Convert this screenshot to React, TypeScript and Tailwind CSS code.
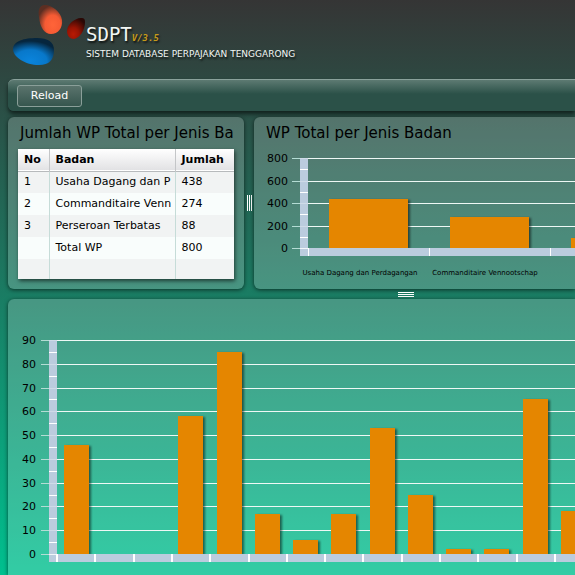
import React from "react";

type Bar = { x: number; width: number; value: number };

type ChartProps = {
  label: string;
  top: number;
  height: number;
  max: number;
  step: number;
  axisX: number;
  labelX: number;
  bars: Bar[];
  ticks: number[];
  tickWidth: number;
  className: string;
  children?: React.ReactNode;
};

function ColumnChart(props: ChartProps) {
  const { label, top, height, max, step, axisX, labelX, bars, ticks, tickWidth, className, children } = props;
  const base = top + height;
  const yOf = (v: number) => Math.round(base - (v / max) * height);
  const majors: number[] = [];
  for (let v = 0; v <= max; v += step) majors.push(v);

  return (
    <svg role="img" aria-label={label} className={className} shapeRendering="crispEdges">
      {majors.map((v) => (
        <g key={v}>
          <rect x={axisX - 8} y={yOf(v)} width="8" height="1" fill="#b4dcd4" />
          {v > 0 && <rect x={axisX} y={yOf(v)} width="100%" height="1" fill="#eef8f5" />}
          <text x={labelX} y={yOf(v) + 4} textAnchor="end" className="text-[11px]" fill="#000000">
            {v}
          </text>
        </g>
      ))}
      <rect x={axisX} y={top} width="8" height={height + 8} fill="#bbccde" />
      {majors.map((v) => (
        <g key={v} fill="#ffffff">
          <rect x={axisX} y={yOf(v)} width="8" height="1" fillOpacity={v > 0 ? 0.3 : 0.8} />
          {v < max && <rect x={axisX} y={yOf(v + step / 2)} width="8" height="1" />}
        </g>
      ))}
      {bars.map((b) => (
        <rect
          key={b.x}
          x={b.x}
          y={yOf(b.value)}
          width={b.width}
          height={base - yOf(b.value)}
          fill="#e58600"
          className="drop-shadow-[2px_1px_1px_rgba(0,0,0,0.5)]"
        />
      ))}
      <rect x={axisX + 8} y={base} width="100%" height="8" fill="#bbccde" />
      {ticks.map((x) => (
        <rect key={x} x={x} y={base} width={tickWidth} height="8" fill="#ffffff" />
      ))}
      {children}
    </svg>
  );
}

const rows = [
  { no: "1", badan: "Usaha Dagang dan P", jumlah: "438" },
  { no: "2", badan: "Commanditaire Venn", jumlah: "274" },
  { no: "3", badan: "Perseroan Terbatas", jumlah: "88" },
  { no: "", badan: "Total WP", jumlah: "800" },
  { no: "", badan: "", jumlah: "" },
];

const badanBars: Bar[] = [
  { x: 75, width: 79, value: 438 },
  { x: 196, width: 79, value: 274 },
  { x: 317, width: 79, value: 88 },
];

const monthlyValues = [46, 0, 0, 58, 85, 17, 6, 17, 53, 25, 2, 2, 65, 18];
const monthlyBars: Bar[] = monthlyValues
  .map((value, i) => ({ x: Math.round(55.5 + i * 38.25), width: 25, value }))
  .filter((b) => b.value > 0);
const monthlyTicks = Array.from({ length: 15 }, (_, i) => Math.round(48 + i * 38.3));

function Logo() {
  return (
    <svg viewBox="0 0 90 70" className="h-[70px] w-[90px] shrink-0" aria-hidden="true">
      <defs>
        <radialGradient id="orange" cx="0.6" cy="0.68" r="0.66">
          <stop offset="0" stopColor="#ff6439" />
          <stop offset="0.5" stopColor="#f65b34" />
          <stop offset="1" stopColor="#5c2e22" />
        </radialGradient>
        <radialGradient id="red" cx="0.35" cy="0.78" r="0.8">
          <stop offset="0" stopColor="#b81a04" />
          <stop offset="0.4" stopColor="#981404" />
          <stop offset="1" stopColor="#2a0805" />
        </radialGradient>
        <radialGradient id="blue" cx="0.42" cy="0.85" r="0.74">
          <stop offset="0" stopColor="#0a84dc" />
          <stop offset="0.55" stopColor="#0878ca" />
          <stop offset="1" stopColor="#06263e" />
        </radialGradient>
      </defs>
      <path d="M45 5C39 5 38 11 39 17C40 27 44 34 51 34C58 34 63 28 62 20C61 12 52 5 45 5Z" fill="url(#orange)" />
      <path d="M82 18C76 17 67 24 67 31C67 36 70 39 74 39C80 38 85 30 85 22C85 19 84 18 82 18Z" fill="url(#red)" />
      <path d="M13 49C13 41 24 38 37 38C48 38 54 42 54 50C54 60 49 65 39 65C25 65 13 57 13 49Z" fill="url(#blue)" />
    </svg>
  );
}

export default function App() {
  return (
    <div className="flex min-h-screen flex-col overflow-hidden bg-[linear-gradient(to_bottom,#353535,#00c08f)] pl-2 font-['DejaVu_Sans',Verdana,sans-serif] text-[11px] text-black">
      <header className="-ml-2 flex h-[79px] items-start">
        <Logo />
        <div className="-ml-1 pt-6 whitespace-nowrap text-[#f2f6f4] [text-shadow:1px_2px_2px_rgba(0,0,0,0.7)]">
          <h1 className="flex items-baseline font-['DejaVu_Sans_Mono',monospace] text-[19px] leading-5">
            SDPT
            <span className="text-[9px] font-bold text-[#c79a1a] italic">V/3.5</span>
          </h1>
          <p className="text-[9px] leading-3">SISTEM DATABASE PERPAJAKAN TENGGARONG</p>
        </div>
      </header>

      <div className="flex h-8 items-center rounded-l-md border-t border-[#8aa19b] bg-[linear-gradient(to_bottom,#5d7a72,#2b5148_45%,#2b5148)] pl-[9px] shadow-[0_3px_4px_rgba(0,0,0,0.6)]">
        <button
          type="button"
          className="h-[22px] w-[65px] rounded-[3px] border border-[#8a9f99] bg-[linear-gradient(to_bottom,#5a736c,#36564e)] text-[11px] leading-5 text-white"
        >
          Reload
        </button>
      </div>

      <main className="flex flex-1 flex-col pt-[6px]">
        <div className="flex h-[172px]">
          <section className="w-[236px] shrink-0 rounded-md bg-white/20 px-[10px] shadow-[0_1px_4px_rgba(0,0,0,0.6)]">
            <h2 className="h-8 overflow-hidden pl-[2px] text-[15px] leading-8 whitespace-nowrap">
              Jumlah WP Total per Jenis Ba
            </h2>
            <table className="w-full table-fixed border-collapse bg-white text-left leading-4 shadow-[1px_2px_4px_rgba(0,0,0,0.6)]">
              <colgroup>
                <col className="w-[31px]" />
                <col className="w-[126px]" />
                <col />
              </colgroup>
              <thead>
                <tr className="h-[22px] border-b border-[#b7babc] bg-[linear-gradient(to_bottom,#ffffff,#e2e2e4)]">
                  <th className="border-r border-[#c4c6c8] px-[6px] py-0">No</th>
                  <th className="border-r border-[#c4c6c8] px-[6px] py-0">Badan</th>
                  <th className="px-[6px] py-0">Jumlah</th>
                </tr>
              </thead>
              <tbody className="whitespace-nowrap">
                {rows.map((r, i) => (
                  <tr key={i} className="h-[22px] odd:bg-[#f1f3f3] even:bg-[#f9fdfc] last:h-5">
                    <td className="overflow-hidden border-r border-[#c6dcd8] px-[6px] py-0">{r.no}</td>
                    <td className="overflow-hidden border-r border-[#c6dcd8] py-0 pr-0 pl-[6px]">{r.badan}</td>
                    <td className="overflow-hidden px-[6px] py-0">{r.jumlah}</td>
                  </tr>
                ))}
              </tbody>
            </table>
          </section>

          <div className="flex w-[10px] shrink-0 items-center justify-center gap-px">
            <i className="h-4 w-px bg-white" />
            <i className="h-4 w-px bg-white" />
            <i className="h-4 w-px bg-white" />
          </div>

          <section className="flex min-w-0 flex-1 flex-col rounded-l-md bg-white/20 shadow-[0_1px_4px_rgba(0,0,0,0.6)]">
            <h2 className="h-8 pl-3 text-[15px] leading-8 whitespace-nowrap">WP Total per Jenis Badan</h2>
            <ColumnChart
              label="WP Total per Jenis Badan"
              className="h-[140px] w-full"
              top={9}
              height={90}
              max={800}
              step={200}
              axisX={46}
              labelX={34}
              bars={badanBars}
              ticks={[54, 175, 296]}
              tickWidth={1}
            >
              <g className="text-[7px]" textAnchor="middle" fill="#000000">
                <text x="106" y="126">Usaha Dagang dan Perdagangan</text>
                <text x="231" y="126">Commanditaire Vennootschap</text>
              </g>
            </ColumnChart>
          </section>
        </div>

        <div className="flex h-[10px] flex-col justify-center gap-px pl-[390px]">
          <i className="h-px w-4 bg-white" />
          <i className="h-px w-4 bg-white" />
          <i className="h-px w-4 bg-white" />
        </div>

        <section className="flex-1 rounded-tl-md bg-white/20 shadow-[0_1px_4px_rgba(0,0,0,0.6)]">
          <ColumnChart
            label="Jumlah WP"
            className="block h-[276px] w-full"
            top={41}
            height={214}
            max={90}
            step={10}
            axisX={41}
            labelX={28}
            bars={monthlyBars}
            ticks={monthlyTicks}
            tickWidth={2}
          />
        </section>
      </main>
    </div>
  );
}
